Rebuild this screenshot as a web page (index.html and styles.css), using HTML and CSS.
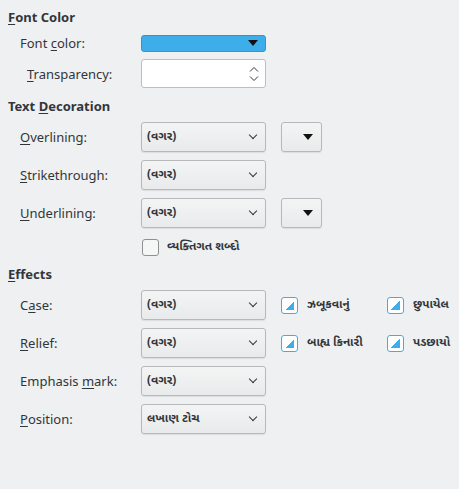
FILE: index.html
```html
<!DOCTYPE html>
<html lang="en">
<head>
    <meta charset="UTF-8">
    <meta name="viewport" content="width=device-width, initial-scale=1.0">
    <title>Font Effects</title>
    <link rel="stylesheet" href="styles.css">
</head>
<body>
    <div class="page">
        <div class="heading h-first"><u>F</u>ont Color</div>

        <div class="row row-color">
            <span class="label">Font <u>c</u>olor:</span>
            <button type="button" class="color-btn"><span class="tri"></span></button>
        </div>
        <div class="row row-spin">
            <span class="label label-indent"><u>T</u>ransparency:</span>
            <div class="spin">
                <span class="spin-arrows">
                    <svg width="10" height="16" viewBox="0 0 10 16"><path d="M1 5.5 L5 1.5 L9 5.5 M1 10.5 L5 14.5 L9 10.5" fill="none" stroke="#31363b" stroke-width="1"/></svg>
                </span>
            </div>
        </div>

        <div class="heading h-next">Text <u>D</u>ecoration</div>

        <div class="row">
            <span class="label"><u>O</u>verlining:</span>
            <div class="select"><span class="gu">(વગર)</span><span class="chev"></span></div>
            <button type="button" class="small-btn"><span class="tri"></span></button>
        </div>
        <div class="row">
            <span class="label"><u>S</u>trikethrough:</span>
            <div class="select"><span class="gu">(વગર)</span><span class="chev"></span></div>
        </div>
        <div class="row">
            <span class="label"><u>U</u>nderlining:</span>
            <div class="select"><span class="gu">(વગર)</span><span class="chev"></span></div>
            <button type="button" class="small-btn"><span class="tri"></span></button>
        </div>
        <div class="row row-check">
            <span class="label"></span>
            <span class="check"></span>
            <span class="gu check-text">વ્યક્તિગત શબ્દો</span>
        </div>

        <div class="heading h-next"><u>E</u>ffects</div>

        <div class="row">
            <span class="label">C<u>a</u>se:</span>
            <div class="select"><span class="gu">(વગર)</span><span class="chev"></span></div>
            <div class="opt opt-first"><span class="check partial"></span><span class="gu">ઝબૂકવાનું</span></div>
            <div class="opt"><span class="check partial"></span><span class="gu">છુપાયેલ</span></div>
        </div>
        <div class="row">
            <span class="label"><u>R</u>elief:</span>
            <div class="select"><span class="gu">(વગર)</span><span class="chev"></span></div>
            <div class="opt opt-first"><span class="check partial"></span><span class="gu">બાહ્ય કિનારી</span></div>
            <div class="opt"><span class="check partial"></span><span class="gu">પડછાયો</span></div>
        </div>
        <div class="row">
            <span class="label">Emphasis <u>m</u>ark:</span>
            <div class="select"><span class="gu">(વગર)</span><span class="chev"></span></div>
        </div>
        <div class="row">
            <span class="label"><u>P</u>osition:</span>
            <div class="select"><span class="gu">લખાણ ટોચ</span><span class="chev"></span></div>
        </div>
    </div>
</body>
</html>
```

FILE: styles.css
```css
body {
    margin: 0;
    background-color: #eff0f1;
    color: #31363b;
    font-family: "Noto Sans", sans-serif;
    font-size: 13px;
}

.page {
    padding: 8px;
    display: flex;
    flex-direction: column;
}

u {
    text-underline-offset: 2px;
}

.heading {
    height: 18px;
    line-height: 18px;
    font-weight: bold;
}

.h-next {
    margin-top: 9px;
}

.h-next + .row {
    margin-top: 7px;
}

.row {
    display: flex;
    align-items: center;
    height: 30px;
    margin-top: 8px;
}

.row-color {
    margin-top: 2px;
}

.row-spin {
    margin-top: 1px;
    height: 29px;
}

.row-check {
    height: 22px;
}

.row-check + .heading {
    margin-top: 7px;
}

.label {
    width: 121px;
    padding-left: 12px;
    flex-shrink: 0;
}

.label-indent {
    padding-left: 19px;
    width: 114px;
}

.gu {
    font-family: "Noto Sans Gujarati", "Lohit Gujarati", "Noto Sans", sans-serif;
    font-size: 11.8px;
    font-weight: bold;
    white-space: nowrap;
}

.color-btn {
    width: 125px;
    height: 17px;
    border: 1px solid #3496cc;
    border-radius: 3px;
    background-color: #3daee9;
    padding: 0 7px 0 0;
    display: flex;
    justify-content: flex-end;
    align-items: center;
}

.tri {
    width: 0;
    height: 0;
    border-left: 5px solid transparent;
    border-right: 5px solid transparent;
    border-top: 6px solid #111;
}

.spin {
    width: 125px;
    height: 29px;
    box-sizing: border-box;
    background: #fff;
    border: 1px solid #bcbebf;
    border-radius: 3px;
    display: flex;
    justify-content: flex-end;
    align-items: center;
    padding-right: 6px;
}

.spin-arrows svg {
    display: block;
}

.select {
    width: 125px;
    height: 30px;
    flex-shrink: 0;
    box-sizing: border-box;
    border: 1px solid #b6b8ba;
    border-radius: 3px;
    background: linear-gradient(#f3f4f4, #e9eaeb);
    display: flex;
    align-items: center;
    justify-content: space-between;
    padding: 0 9px 0 5px;
    box-shadow: 0 1px 1px rgba(0, 0, 0, 0.08);
}

.chev {
    width: 5px;
    height: 5px;
    border-right: 1px solid #31363b;
    border-bottom: 1px solid #31363b;
    transform: rotate(45deg);
    margin-top: -4px;
}

.small-btn {
    width: 41px;
    height: 30px;
    margin-left: 15px;
    border: 1px solid #b6b8ba;
    border-radius: 3px;
    background: linear-gradient(#f3f4f4, #e9eaeb);
    display: flex;
    justify-content: flex-end;
    align-items: center;
    padding: 0 8px 0 0;
    box-shadow: 0 1px 1px rgba(0, 0, 0, 0.08);
}

.check {
    width: 17px;
    height: 17px;
    box-sizing: border-box;
    border: 1px solid #8e9194;
    border-radius: 3px;
    background: #f5f6f6;
    margin-left: 1px;
    flex-shrink: 0;
}

.check-text {
    margin-left: 8px;
}

.check.partial {
    border: 1px solid #3daee9;
    background: linear-gradient(to bottom right, #fff 50%, #3daee9 50%) content-box, #fff;
    padding: 3px;
    margin-left: 0;
}

.opt {
    display: flex;
    align-items: center;
    gap: 9px;
    flex-shrink: 0;
}

.opt-first {
    margin-left: 15px;
    width: 106px;
}
```
